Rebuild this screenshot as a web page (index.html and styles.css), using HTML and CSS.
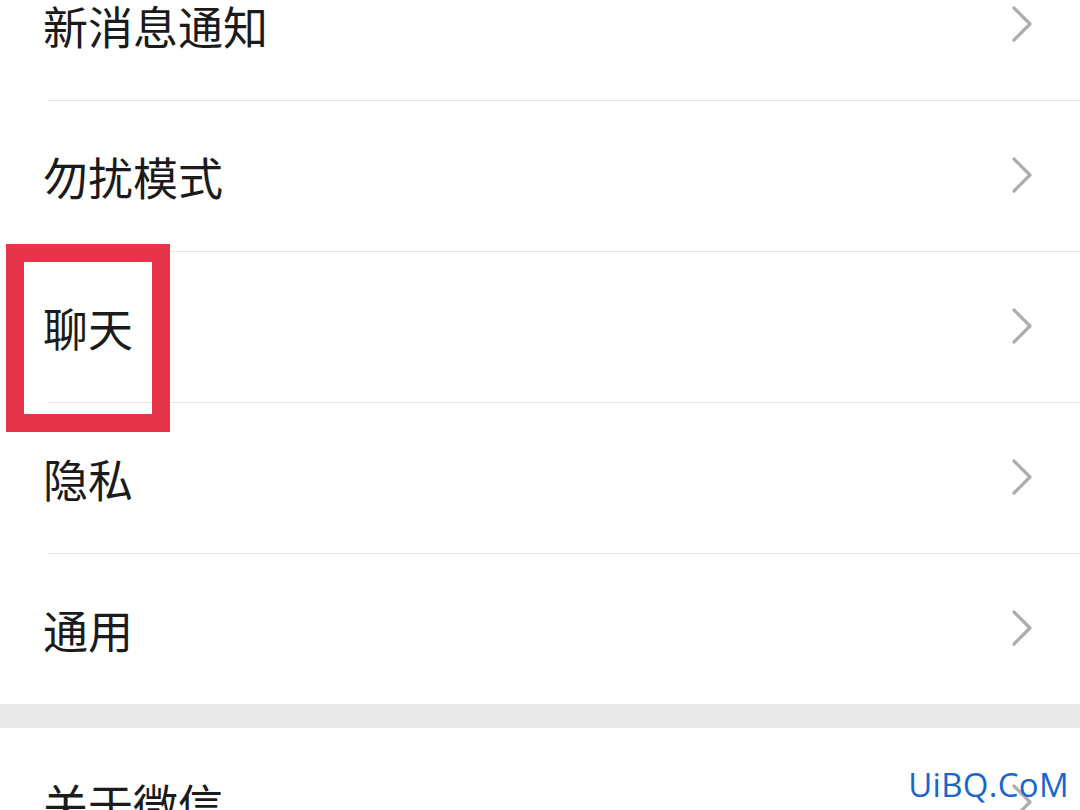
FILE: index.html
```html
<!DOCTYPE html>
<html lang="zh-CN">
<head>
<meta charset="utf-8">
<title>设置</title>
<link rel="stylesheet" href="styles.css">
</head>
<body>
<div class="list">
  <div class="item"><span class="label">新消息通知</span><svg class="chev" viewBox="0 0 20 36" width="20" height="36"><polyline points="2,2 18,18 2,34"/></svg></div>
  <div class="item"><span class="label">勿扰模式</span><svg class="chev" viewBox="0 0 20 36" width="20" height="36"><polyline points="2,2 18,18 2,34"/></svg></div>
  <div class="item highlighted"><span class="label">聊天</span><svg class="chev" viewBox="0 0 20 36" width="20" height="36"><polyline points="2,2 18,18 2,34"/></svg><div class="mark"></div></div>
  <div class="item"><span class="label">隐私</span><svg class="chev" viewBox="0 0 20 36" width="20" height="36"><polyline points="2,2 18,18 2,34"/></svg></div>
  <div class="item last"><span class="label">通用</span><svg class="chev" viewBox="0 0 20 36" width="20" height="36"><polyline points="2,2 18,18 2,34"/></svg></div>
</div>
<div class="gap"></div>
<div class="list">
  <div class="item last"><span class="label">关于微信</span><svg class="chev" viewBox="0 0 20 36" width="20" height="36"><polyline points="2,2 18,18 2,34"/></svg></div>
</div>
<div class="watermark">UiBQ.CoM</div>
</body>
</html>
```
FILE: styles.css
```css
html, body {
  margin: 0;
  padding: 0;
  background: #ffffff;
}
body {
  width: 1080px;
  height: 810px;
  overflow: hidden;
  position: relative;
  font-family: "Noto Sans CJK SC", "Noto Sans", sans-serif;
  color: #1b1b1b;
}
.list {
  background: #ffffff;
}
.list:first-child {
  margin-top: -50px;
}
.item {
  position: relative;
  margin-left: 48px;
  height: 150px;
  display: flex;
  align-items: center;
  justify-content: space-between;
  border-bottom: 1px solid #e6e6e6;
  padding-right: 48px;
}
.item.last {
  border-bottom: none;
}
.label {
  margin-left: -5px;
  font-size: 45px;
  line-height: 1;
  letter-spacing: 0;
}
.chev {
  display: block;
  margin-top: -3px;
}
.chev polyline {
  fill: none;
  stroke: #adadad;
  stroke-width: 3.2;
  stroke-linecap: round;
  stroke-linejoin: round;
}
.gap {
  height: 24px;
  background: #e9e9e9;
}
.mark {
  position: absolute;
  left: -42px;
  top: -8px;
  width: 128px;
  height: 152px;
  border: 18px solid #e6344b;
}
.watermark {
  position: absolute;
  right: 11px;
  bottom: 9px;
  font-family: "Open Sans", "Liberation Sans", sans-serif;
  font-size: 33px;
  line-height: 1;
  color: #1a66c9;
  letter-spacing: 0.3px;
}
```
